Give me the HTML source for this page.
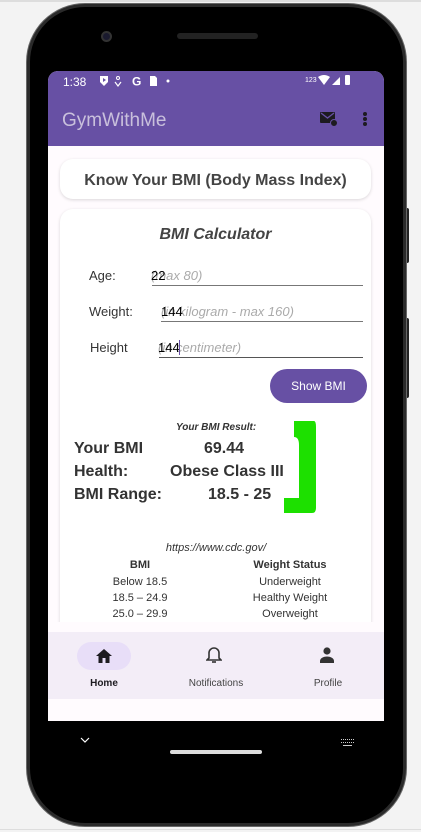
<!DOCTYPE html>
<html><head><meta charset="utf-8"><style>
*{margin:0;padding:0;box-sizing:border-box}
body{width:421px;height:832px;background:#f3f3f3;font-family:"Liberation Sans",Roboto,sans-serif;position:relative;overflow:hidden}
.abs{position:absolute}
.phone{left:27px;top:4px;width:379px;height:822px;background:#000;border-radius:58px;border:3px solid #2a2a2a;box-shadow:0 0 0 1px #666}
.screen{left:48px;top:71px;width:336px;height:650px;background:#fffbfe;border-radius:10px 10px 0 0;overflow:hidden}
.t{position:absolute;white-space:nowrap;color:#333}
</style></head><body>
<div class="abs" style="left:0;top:0;width:421px;height:2px;background:#ddd"></div>
<div class="abs" style="left:0;top:829px;width:421px;height:1px;background:#ddd"></div>
<div class="abs" style="left:404px;top:208px;width:5px;height:55px;background:#222;border-radius:2px"></div>
<div class="abs" style="left:404px;top:318px;width:5px;height:80px;background:#222;border-radius:2px"></div>
<div class="abs phone"></div>
<div class="abs" style="left:101px;top:31px;width:11px;height:11px;border-radius:50%;background:#1a1a2e;border:2px solid #333"></div>
<div class="abs" style="left:177px;top:33px;width:81px;height:6px;border-radius:3px;background:#222"></div>
<div class="abs screen">
 <div class="abs" style="left:0;top:0;width:336px;height:75px;background:#6750a4"></div>
 <div class="t" style="left:15px;top:4px;color:#fff;font-size:12px">1:38</div>
 <svg class="abs" style="left:51px;top:4px" width="80" height="12" viewBox="0 0 80 12"><path d="M1 1h8v6l-4 4-4-4z" fill="#fff"/><path d="M4 3l3 2-3 2z" fill="#6750a4"/><circle cx="19" cy="3" r="1.5" fill="none" stroke="#fff"/><path d="M16 7l3 4 3-4" fill="none" stroke="#fff" stroke-width="1.2"/><text x="33" y="10.5" font-size="12" font-weight="bold" fill="#fff" font-family="Liberation Sans">G</text><path d="M51 1h5l2 2v8h-7z" fill="#fff"/><circle cx="69" cy="6" r="1.5" fill="#fff"/></svg>
 <div class="t" style="left:257px;top:6px;color:#fff;font-size:7px">123</div>
 <svg class="abs" style="left:270px;top:3px" width="40" height="12" viewBox="0 0 40 12"><path d="M0 3q6-4 12 0l-6 8z" fill="#fff"/><path d="M14 11L22 3v8z" fill="#fff"/><rect x="27" y="1" width="5" height="10" rx="1" fill="#fff"/></svg>
 <div class="t" style="left:14px;top:39px;color:#c9c0dc;font-size:19px">GymWithMe</div>
 <svg class="abs" style="left:272px;top:39px" width="18" height="18" viewBox="0 0 18 18"><rect x="0" y="2" width="15" height="11" rx="1" fill="#1d1b20"/><path d="M1 3l6.5 5L14 3" stroke="#6750a4" stroke-width="1.3" fill="none"/><circle cx="14" cy="13" r="3.5" fill="#1d1b20" stroke="#6750a4"/></svg>
 <div class="abs" style="left:315px;top:41px;width:4px;height:4px;border-radius:50%;background:#1d1b20;box-shadow:0 5px 0 #1d1b20,0 10px 0 #1d1b20"></div>
 <div class="abs" style="left:12px;top:88px;width:311px;height:40px;background:#fff;border-radius:13px;box-shadow:0 1px 3px rgba(0,0,0,.15)"></div>
 <div class="t" style="left:12px;width:311px;text-align:center;top:101px;font-size:16px;font-weight:bold;color:#444">Know Your BMI (Body Mass Index)</div>
 <div class="abs" style="left:12px;top:138px;width:311px;height:480px;background:#fff;border-radius:13px;box-shadow:0 1px 3px rgba(0,0,0,.15)"></div>
 <div class="t" style="left:12px;width:311px;text-align:center;top:155px;font-size:16px;font-weight:bold;font-style:italic;color:#444">BMI Calculator</div>
 <div class="t" style="left:41px;top:197px;font-size:13px">Age:</div>
 <div class="t" style="left:103px;top:197px;font-size:13px;font-style:italic;color:#aaa">(max 80)</div>
 <div class="t" style="left:103px;top:197px;font-size:13px;color:#000">22</div>
 <div class="abs" style="left:104px;top:214px;width:211px;height:1px;background:#777"></div>
 <div class="t" style="left:41px;top:233px;font-size:13px">Weight:</div>
 <div class="t" style="left:113px;top:233px;font-size:13px;font-style:italic;color:#aaa">(in kilogram - max 160)</div>
 <div class="t" style="left:113px;top:233px;font-size:13px;color:#000">144</div>
 <div class="abs" style="left:113px;top:250px;width:202px;height:1px;background:#777"></div>
 <div class="t" style="left:42px;top:269px;font-size:13px">Height</div>
 <div class="t" style="left:110px;top:269px;font-size:13px;font-style:italic;color:#aaa">(in centimeter)</div>
 <div class="t" style="left:110px;top:269px;font-size:13px;color:#000">144</div>
 <div class="abs" style="left:131px;top:269px;width:1px;height:15px;background:#6750a4"></div>
 <div class="abs" style="left:111px;top:286px;width:204px;height:1px;background:#555"></div>
 <div class="abs" style="left:222px;top:298px;width:97px;height:34px;border-radius:17px;background:#6750a4"></div>
 <div class="t" style="left:222px;width:97px;text-align:center;top:308px;color:#fff;font-size:12px">Show BMI</div>
 <div class="t" style="left:128px;top:351px;font-size:10px;font-weight:bold;font-style:italic">Your BMI Result:</div>
 <div class="t" style="left:26px;top:369px;font-size:16px;font-weight:bold">Your BMI</div>
 <div class="t" style="left:156px;top:369px;font-size:16px;font-weight:bold">69.44</div>
 <div class="t" style="left:26px;top:392px;font-size:16px;font-weight:bold">Health:</div>
 <div class="t" style="left:122px;top:392px;font-size:16px;font-weight:bold">Obese Class III</div>
 <div class="t" style="left:26px;top:415px;font-size:16px;font-weight:bold">BMI Range:</div>
 <div class="t" style="left:160px;top:415px;font-size:16px;font-weight:bold">18.5 - 25</div>
 <svg class="abs" style="left:236px;top:350px" width="36" height="93" viewBox="0 0 36 93"><path d="M10 0h20q2 0 2 6v81q0 5-4 5H0v-15h15V24q0-8-5-8z" fill="#1de000"/></svg>
 <div class="t" style="left:0;width:336px;text-align:center;top:471px;font-size:11px;font-style:italic">https://www.cdc.gov/</div>
 <div class="t" style="left:62px;width:60px;text-align:center;top:488px;font-size:11px;font-weight:bold">BMI</div>
 <div class="t" style="left:182px;width:120px;text-align:center;top:488px;font-size:11px;font-weight:bold">Weight Status</div>
 <div class="t" style="left:52px;width:80px;text-align:center;top:505px;font-size:11px">Below 18.5</div>
 <div class="t" style="left:182px;width:120px;text-align:center;top:505px;font-size:11px">Underweight</div>
 <div class="t" style="left:52px;width:80px;text-align:center;top:521px;font-size:11px">18.5 – 24.9</div>
 <div class="t" style="left:182px;width:120px;text-align:center;top:521px;font-size:11px">Healthy Weight</div>
 <div class="t" style="left:52px;width:80px;text-align:center;top:537px;font-size:11px">25.0 – 29.9</div>
 <div class="t" style="left:182px;width:120px;text-align:center;top:537px;font-size:11px">Overweight</div>
 <div class="abs" style="left:0;top:551px;width:336px;height:10px;background:#fffbfe"></div>
 <div class="abs" style="left:0;top:561px;width:336px;height:67px;background:#f3edf7"></div>
 <div class="abs" style="left:29px;top:571px;width:54px;height:28px;border-radius:14px;background:#e8def8"></div>
 <svg class="abs" style="left:47px;top:577px" width="18" height="16" viewBox="0 0 18 16"><path d="M9 1L1 8h2.5v7h4v-5h3v5h4V8H17z" fill="#1d1b20"/></svg>
 <svg class="abs" style="left:158px;top:575px" width="16" height="18" viewBox="0 0 16 18"><path d="M8 2a5 5 0 0 0-5 5v5l-2 2h14l-2-2V7a5 5 0 0 0-5-5z" fill="none" stroke="#333" stroke-width="1.6"/><path d="M6 16h4" stroke="#333" stroke-width="1.6"/></svg>
 <svg class="abs" style="left:270px;top:576px" width="18" height="16" viewBox="0 0 18 16"><circle cx="9" cy="4" r="3.6" fill="#333"/><path d="M2 16v-2c0-3 4-4.5 7-4.5s7 1.5 7 4.5v2z" fill="#333"/></svg>
 <div class="t" style="left:26px;width:60px;text-align:center;top:607px;font-size:10px;font-weight:bold;color:#1d1b20">Home</div>
 <div class="t" style="left:128px;width:80px;text-align:center;top:607px;font-size:10px;color:#444">Notifications</div>
 <div class="t" style="left:250px;width:60px;text-align:center;top:607px;font-size:10px;color:#444">Profile</div>
</div>
<svg class="abs" style="left:80px;top:736px" width="10" height="8" viewBox="0 0 10 8"><path d="M1 2l4 4 4-4" stroke="#fff" stroke-width="1.2" fill="none"/></svg>
<div class="abs" style="left:170px;top:750px;width:92px;height:4px;border-radius:2px;background:#ddd"></div>
<div class="abs" style="left:341px;top:739px;width:13px;height:4px;border-top:1px dotted #ccc;border-bottom:1px dotted #ccc"></div>
<div class="abs" style="left:343px;top:745px;width:9px;height:1px;background:#ccc"></div>
</body></html>
